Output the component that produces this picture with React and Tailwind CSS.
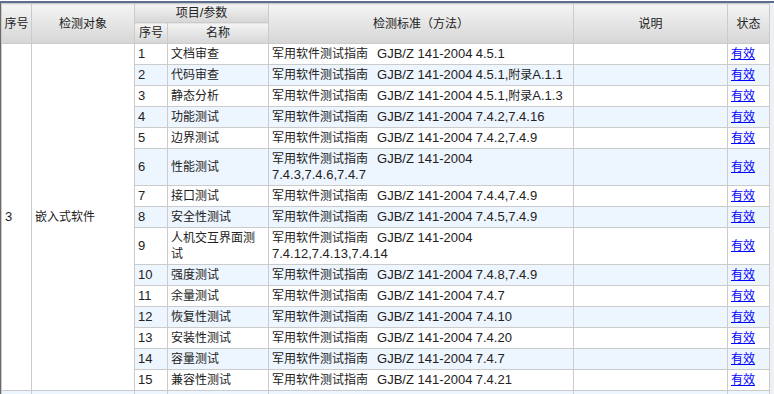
const items = [
  { no: 1, name: '文档审查', std: '4.5.1' },
  { no: 2, name: '代码审查', std: '4.5.1,附录A.1.1' },
  { no: 3, name: '静态分析', std: '4.5.1,附录A.1.3' },
  { no: 4, name: '功能测试', std: '7.4.2,7.4.16' },
  { no: 5, name: '边界测试', std: '7.4.2,7.4.9' },
  { no: 6, name: '性能测试', std: '7.4.3,7.4.6,7.4.7', wrap: true },
  { no: 7, name: '接口测试', std: '7.4.4,7.4.9' },
  { no: 8, name: '安全性测试', std: '7.4.5,7.4.9' },
  { no: 9, name: ['人机交互界面测', '试'], std: '7.4.12,7.4.13,7.4.14', wrap: true },
  { no: 10, name: '强度测试', std: '7.4.8,7.4.9' },
  { no: 11, name: '余量测试', std: '7.4.7' },
  { no: 12, name: '恢复性测试', std: '7.4.10' },
  { no: 13, name: '安装性测试', std: '7.4.20' },
  { no: 14, name: '容量测试', std: '7.4.7' },
  { no: 15, name: '兼容性测试', std: '7.4.21' },
]

// latin runs are a bit larger than the CJK ones in the original page
function Mixed({ text }) {
  return String(text)
    .split(/([\u3000-\u9fff\uff00-\uffef]+)/)
    .filter(Boolean)
    .map((part, i) =>
      /[\u3000-\u9fff\uff00-\uffef]/.test(part) ? (
        <span key={i}>{part}</span>
      ) : (
        <span key={i} className="text-[13px] leading-[14px]">{part}</span>
      )
    )
}

const th = 'border border-[#cbcbcb] bg-linear-to-b from-[#f4f4f4] to-[#d6d6d6] font-normal text-center px-[2px]'
const td = 'border border-[#cbcbcb] px-[3px] py-[2px] align-middle text-left whitespace-nowrap'

export default function App() {
  return (
    <div className="w-[774px] h-[394px] overflow-hidden bg-white text-[12px] leading-[16px] text-[#222] font-['Liberation_Sans','Noto_Sans_CJK_SC',sans-serif]">
      <div className="mt-[1px] border-t-2 border-[#5b6e8d] flex">
        <div className="border-l border-[#6a6a6a]">
          <table className="table-fixed border-collapse w-[768px]">
            <colgroup>
              <col className="w-[30px]" />
              <col className="w-[103px]" />
              <col className="w-[33px]" />
              <col className="w-[101px]" />
              <col className="w-[305px]" />
              <col className="w-[154px]" />
              <col className="w-[42px]" />
            </colgroup>
            <thead>
              <tr>
                <th rowSpan={2} className={th}>序号</th>
                <th rowSpan={2} className={th}>检测对象</th>
                <th colSpan={2} className={th + ' py-[1px]'}><Mixed text="项目/参数" /></th>
                <th rowSpan={2} className={th}>检测标准（方法）</th>
                <th rowSpan={2} className={th}>说明</th>
                <th rowSpan={2} className={th}>状态</th>
              </tr>
              <tr>
                <th className={th + ' py-[2px]'}>序号</th>
                <th className={th + ' py-[2px]'}>名称</th>
              </tr>
            </thead>
            <tbody>
              {items.map((it, i) => (
                <tr key={it.no} className={i % 2 === 1 ? 'bg-[#edf5fe]' : 'bg-white'}>
                  {i === 0 && (
                    <>
                      <td rowSpan={items.length} className={td + ' bg-white'}>
                        <span className="text-[13px] leading-[14px]">3</span>
                      </td>
                      <td rowSpan={items.length} className={td + ' bg-white'}>嵌入式软件</td>
                    </>
                  )}
                  <td className={td}>
                    <span className="text-[13px] leading-[14px]">{it.no}</span>
                  </td>
                  <td className={td}>
                    {Array.isArray(it.name) ? (
                      <>
                        {it.name[0]}
                        <br />
                        {it.name[1]}
                      </>
                    ) : (
                      it.name
                    )}
                  </td>
                  <td className={td}>
                    军用软件测试指南
                    <span className="ml-[9px] text-[13px] leading-[14px]">GJB/Z 141-2004</span>
                    {it.wrap ? <br /> : ' '}
                    <Mixed text={it.std} />
                  </td>
                  <td className={td}></td>
                  <td className={td + ' px-[2px]'}>
                    <a href="#" className="text-[#0000ff] underline">有效</a>
                  </td>
                </tr>
              ))}
              <tr className="bg-[#edf5fe]">
                <td className={td + ' h-[21px]'}></td>
                <td className={td}></td>
                <td className={td}></td>
                <td className={td}></td>
                <td className={td}></td>
                <td className={td}></td>
                <td className={td}></td>
              </tr>
            </tbody>
          </table>
        </div>
        <div className="flex-1 bg-[#eef0f3]" />
      </div>
    </div>
  )
}
